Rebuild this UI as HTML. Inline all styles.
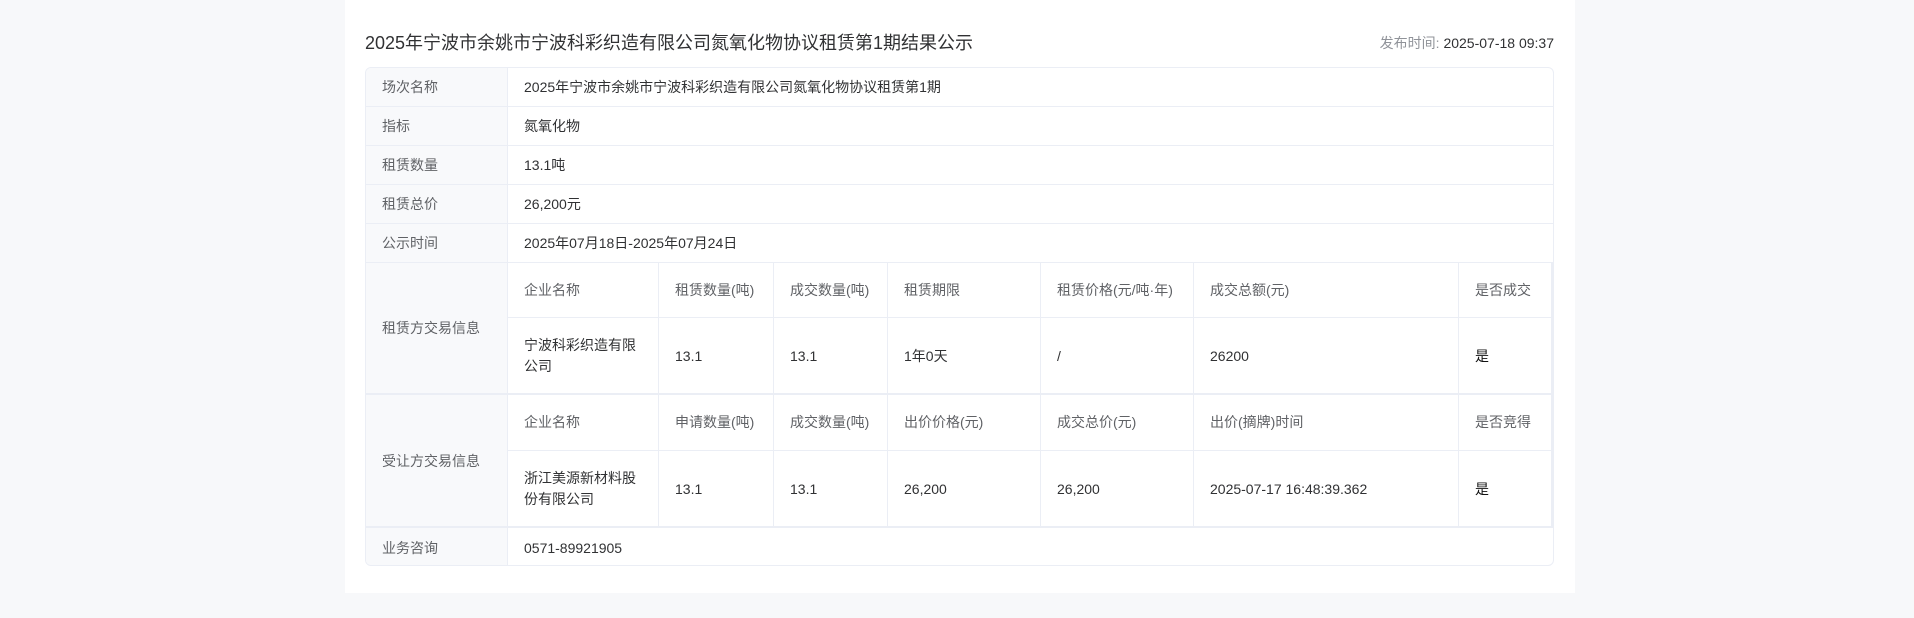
<!DOCTYPE html>
<html><head><meta charset="utf-8"><style>
*{margin:0;padding:0;box-sizing:border-box}
body{width:1914px;height:618px;background:#f7f8fa;font-family:"Liberation Sans","Noto Sans CJK SC",sans-serif;overflow:hidden;position:relative}
.card{position:absolute;left:345px;top:0;width:1230px;height:593px;background:#fff}
.title{position:absolute;left:20px;top:30px;font-size:18px;color:#303133;line-height:26px}
.pub{position:absolute;right:21px;top:34px;font-size:14px;color:#303133;line-height:18px}
.pub span{color:#909399}
.tbl{position:absolute;left:20px;top:67px;width:1189px;height:499px;border:1px solid #ebeef5;border-radius:6px;overflow:hidden}
.row{position:absolute;left:0;width:100%;border-bottom:1px solid #ebeef5}
.lab{position:absolute;left:0;top:0;bottom:0;width:142px;background:#f8f9fb;border-right:1px solid #ebeef5;color:#606266;font-size:14px;display:flex;align-items:center;padding-left:16px}
.val{position:absolute;left:158px;top:0;bottom:0;display:flex;align-items:center;font-size:14px;color:#303133}
.c{position:absolute;display:flex;align-items:center;padding-left:16px;font-size:14px;color:#303133;border-right:1px solid #ebeef5;border-bottom:1px solid #ebeef5;line-height:21px}
.h{color:#606266}
.b{color:#111}
</style></head><body>
<div class="card">
<div class="title">2025年宁波市余姚市宁波科彩织造有限公司氮氧化物协议租赁第1期结果公示</div>
<div class="pub"><span>发布时间:</span> 2025-07-18 09:37</div>
<div class="tbl">
<div class="row" style="top:0;height:39px"><div class="lab">场次名称</div><div class="val">2025年宁波市余姚市宁波科彩织造有限公司氮氧化物协议租赁第1期</div></div>
<div class="row" style="top:39px;height:39px"><div class="lab">指标</div><div class="val">氮氧化物</div></div>
<div class="row" style="top:78px;height:39px"><div class="lab">租赁数量</div><div class="val">13.1吨</div></div>
<div class="row" style="top:117px;height:39px"><div class="lab">租赁总价</div><div class="val">26,200元</div></div>
<div class="row" style="top:156px;height:39px"><div class="lab">公示时间</div><div class="val">2025年07月18日-2025年07月24日</div></div>
<div class="row" style="top:195px;height:132px;border-bottom:2px solid #ebeef5"><div class="lab">租赁方交易信息</div>
<div class="c h" style="left:142px;top:0;width:151px;height:55px">企业名称</div>
<div class="c h" style="left:293px;top:0;width:115px;height:55px">租赁数量(吨)</div>
<div class="c h" style="left:408px;top:0;width:114px;height:55px">成交数量(吨)</div>
<div class="c h" style="left:522px;top:0;width:153px;height:55px">租赁期限</div>
<div class="c h" style="left:675px;top:0;width:153px;height:55px">租赁价格(元/吨·年)</div>
<div class="c h" style="left:828px;top:0;width:265px;height:55px">成交总额(元)</div>
<div class="c h" style="left:1093px;top:0;width:94px;height:55px;border-right:2px solid #ebeef5">是否成交</div>
<div class="c" style="left:142px;top:55px;width:151px;height:77px;padding-right:14px">宁波科彩织造有限公司</div>
<div class="c" style="left:293px;top:55px;width:115px;height:77px">13.1</div>
<div class="c" style="left:408px;top:55px;width:114px;height:77px">13.1</div>
<div class="c" style="left:522px;top:55px;width:153px;height:77px">1年0天</div>
<div class="c" style="left:675px;top:55px;width:153px;height:77px">/</div>
<div class="c" style="left:828px;top:55px;width:265px;height:77px">26200</div>
<div class="c b" style="left:1093px;top:55px;width:94px;height:77px;border-right:2px solid #ebeef5">是</div>
</div>
<div class="row" style="top:327px;height:133px;border-bottom:2px solid #ebeef5"><div class="lab">受让方交易信息</div>
<div class="c h" style="left:142px;top:0;width:151px;height:56px">企业名称</div>
<div class="c h" style="left:293px;top:0;width:115px;height:56px">申请数量(吨)</div>
<div class="c h" style="left:408px;top:0;width:114px;height:56px">成交数量(吨)</div>
<div class="c h" style="left:522px;top:0;width:153px;height:56px">出价价格(元)</div>
<div class="c h" style="left:675px;top:0;width:153px;height:56px">成交总价(元)</div>
<div class="c h" style="left:828px;top:0;width:265px;height:56px">出价(摘牌)时间</div>
<div class="c h" style="left:1093px;top:0;width:94px;height:56px;border-right:2px solid #ebeef5">是否竞得</div>
<div class="c" style="left:142px;top:56px;width:151px;height:77px;padding-right:14px">浙江美源新材料股份有限公司</div>
<div class="c" style="left:293px;top:56px;width:115px;height:77px">13.1</div>
<div class="c" style="left:408px;top:56px;width:114px;height:77px">13.1</div>
<div class="c" style="left:522px;top:56px;width:153px;height:77px">26,200</div>
<div class="c" style="left:675px;top:56px;width:153px;height:77px">26,200</div>
<div class="c" style="left:828px;top:56px;width:265px;height:77px">2025-07-17 16:48:39.362</div>
<div class="c b" style="left:1093px;top:56px;width:94px;height:77px;border-right:2px solid #ebeef5">是</div>
</div>
<div class="row" style="top:460px;height:39px;border-bottom:none"><div class="lab">业务咨询</div><div class="val">0571-89921905</div></div>
</div>
</div>
</body></html>
